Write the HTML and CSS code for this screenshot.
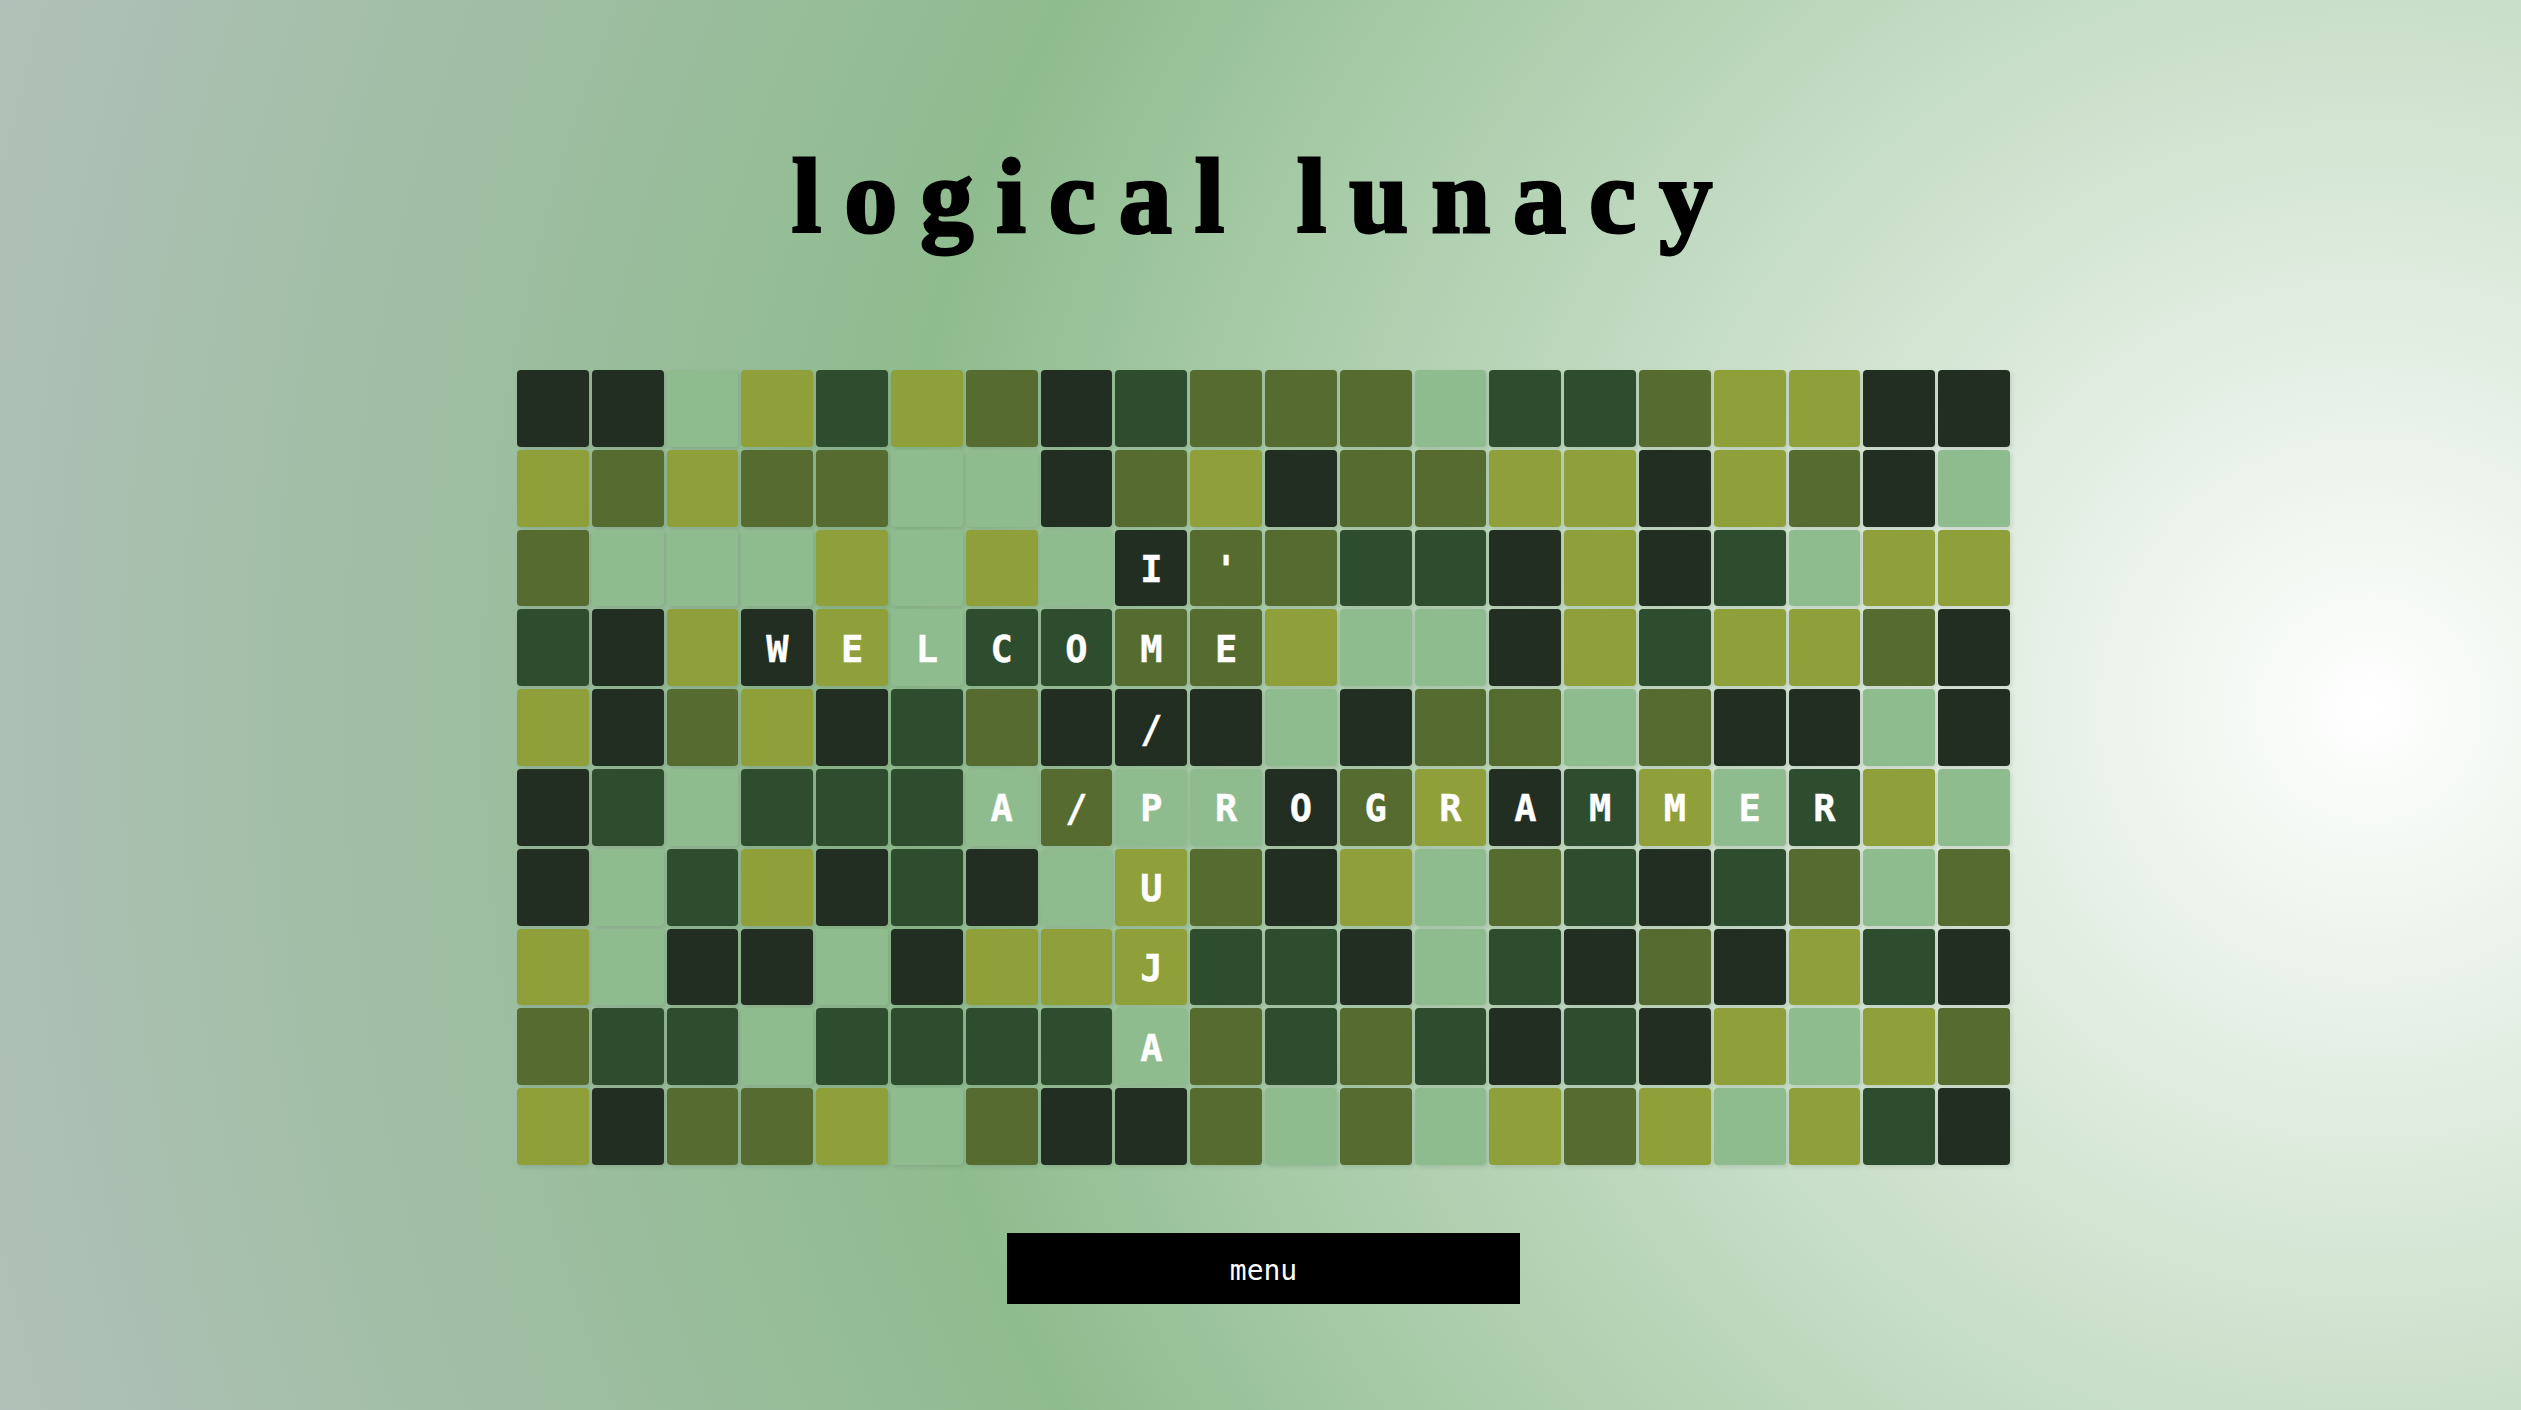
FILE: index.html
```html
<!DOCTYPE html>
<html lang="en">
<head>
<meta charset="utf-8">
<title>logical lunacy</title>
<link rel="stylesheet" href="styles.css">
</head>
<body>
<main class="page">
<h1 class="title">logical lunacy</h1>
<div class="board">
<div class="t k"></div><div class="t k"></div><div class="t l"></div><div class="t o"></div><div class="t g"></div><div class="t o"></div><div class="t m"></div><div class="t k"></div><div class="t g"></div><div class="t m"></div><div class="t m"></div><div class="t m"></div><div class="t l"></div><div class="t g"></div><div class="t g"></div><div class="t m"></div><div class="t o"></div><div class="t o"></div><div class="t k"></div><div class="t k"></div>
<div class="t o"></div><div class="t m"></div><div class="t o"></div><div class="t m"></div><div class="t m"></div><div class="t l"></div><div class="t l"></div><div class="t k"></div><div class="t m"></div><div class="t o"></div><div class="t k"></div><div class="t m"></div><div class="t m"></div><div class="t o"></div><div class="t o"></div><div class="t k"></div><div class="t o"></div><div class="t m"></div><div class="t k"></div><div class="t l"></div>
<div class="t m"></div><div class="t l"></div><div class="t l"></div><div class="t l"></div><div class="t o"></div><div class="t l"></div><div class="t o"></div><div class="t l"></div><div class="t k">I</div><div class="t m">'</div><div class="t m"></div><div class="t g"></div><div class="t g"></div><div class="t k"></div><div class="t o"></div><div class="t k"></div><div class="t g"></div><div class="t l"></div><div class="t o"></div><div class="t o"></div>
<div class="t g"></div><div class="t k"></div><div class="t o"></div><div class="t k">W</div><div class="t o">E</div><div class="t l">L</div><div class="t g">C</div><div class="t g">O</div><div class="t m">M</div><div class="t m">E</div><div class="t o"></div><div class="t l"></div><div class="t l"></div><div class="t k"></div><div class="t o"></div><div class="t g"></div><div class="t o"></div><div class="t o"></div><div class="t m"></div><div class="t k"></div>
<div class="t o"></div><div class="t k"></div><div class="t m"></div><div class="t o"></div><div class="t k"></div><div class="t g"></div><div class="t m"></div><div class="t k"></div><div class="t k">/</div><div class="t k"></div><div class="t l"></div><div class="t k"></div><div class="t m"></div><div class="t m"></div><div class="t l"></div><div class="t m"></div><div class="t k"></div><div class="t k"></div><div class="t l"></div><div class="t k"></div>
<div class="t k"></div><div class="t g"></div><div class="t l"></div><div class="t g"></div><div class="t g"></div><div class="t g"></div><div class="t l">A</div><div class="t m">/</div><div class="t l">P</div><div class="t l">R</div><div class="t k">O</div><div class="t m">G</div><div class="t o">R</div><div class="t k">A</div><div class="t g">M</div><div class="t o">M</div><div class="t l">E</div><div class="t g">R</div><div class="t o"></div><div class="t l"></div>
<div class="t k"></div><div class="t l"></div><div class="t g"></div><div class="t o"></div><div class="t k"></div><div class="t g"></div><div class="t k"></div><div class="t l"></div><div class="t o">U</div><div class="t m"></div><div class="t k"></div><div class="t o"></div><div class="t l"></div><div class="t m"></div><div class="t g"></div><div class="t k"></div><div class="t g"></div><div class="t m"></div><div class="t l"></div><div class="t m"></div>
<div class="t o"></div><div class="t l"></div><div class="t k"></div><div class="t k"></div><div class="t l"></div><div class="t k"></div><div class="t o"></div><div class="t o"></div><div class="t o">J</div><div class="t g"></div><div class="t g"></div><div class="t k"></div><div class="t l"></div><div class="t g"></div><div class="t k"></div><div class="t m"></div><div class="t k"></div><div class="t o"></div><div class="t g"></div><div class="t k"></div>
<div class="t m"></div><div class="t g"></div><div class="t g"></div><div class="t l"></div><div class="t g"></div><div class="t g"></div><div class="t g"></div><div class="t g"></div><div class="t l">A</div><div class="t m"></div><div class="t g"></div><div class="t m"></div><div class="t g"></div><div class="t k"></div><div class="t g"></div><div class="t k"></div><div class="t o"></div><div class="t l"></div><div class="t o"></div><div class="t m"></div>
<div class="t o"></div><div class="t k"></div><div class="t m"></div><div class="t m"></div><div class="t o"></div><div class="t l"></div><div class="t m"></div><div class="t k"></div><div class="t k"></div><div class="t m"></div><div class="t l"></div><div class="t m"></div><div class="t l"></div><div class="t o"></div><div class="t m"></div><div class="t o"></div><div class="t l"></div><div class="t o"></div><div class="t g"></div><div class="t k"></div>
</div>
<button class="menu" type="button">menu</button>
</main>
</body>
</html>
```

FILE: styles.css
```css
html, body {
  margin: 0;
  height: 100%;
}
body {
  background: radial-gradient(circle at 94% 50.3%, #ffffff 0%, #8fbc8f 60%, #b0c0b8 100%);
  overflow: hidden;
}
.page {
  height: 1410px;
  box-sizing: border-box;
  display: flex;
  flex-direction: column;
  align-items: center;
  padding-top: 132px;
}
.title {
  margin: 0 0 0 6px;
  height: 238px;
  font-family: "Liberation Serif", serif;
  font-size: 106px;
  line-height: 130px;
  font-weight: 700;
  letter-spacing: 23px;
  color: #000;
  -webkit-text-stroke: 3px #000;
  white-space: nowrap;
}
.board {
  width: 1493px;
  height: 795px;
  margin-left: 6px;
  display: grid;
  grid-template-columns: repeat(20, 1fr);
  grid-template-rows: repeat(10, 1fr);
  gap: 3px;
}
.t {
  display: flex;
  align-items: center;
  justify-content: center;
  padding-top: 3px;
  border-radius: 4px;
  box-shadow: 2px 2px 4px rgba(0, 0, 0, 0.1);
  color: #fff;
  font-family: "DejaVu Sans Mono", monospace;
  font-size: 37px;
  font-weight: 700;
  -webkit-text-stroke: 0.4px #fff;
}
.k { background: #222e22; }
.g { background: #2e4d2e; }
.l { background: #8fbc8f; }
.o { background: #8f9f3a; }
.m { background: #556b2f; }
.menu {
  width: 513px;
  height: 71px;
  margin-top: 68px;
  margin-left: 6px;
  padding: 3px 0 0;
  border: 0;
  background: #000;
  color: #fff;
  font-family: "DejaVu Sans Mono", monospace;
  font-size: 28px;
}
```
